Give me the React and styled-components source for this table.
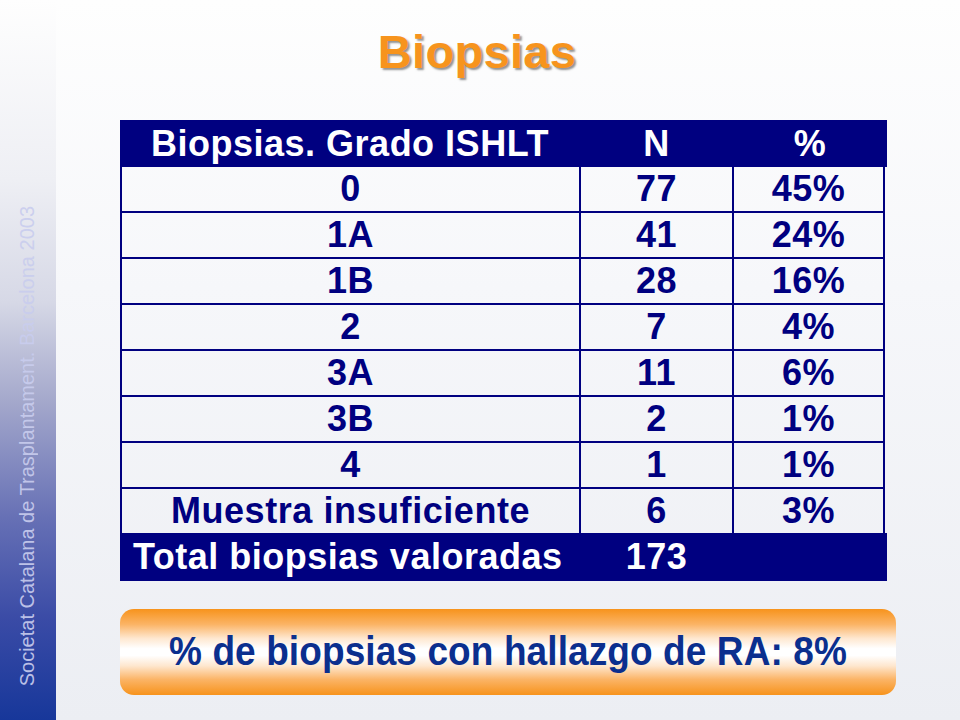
import React from "react";
import styled, { createGlobalStyle } from "styled-components";

const Global = createGlobalStyle`
  html, body { margin: 0; padding: 0; }
  body {
    width: 960px;
    height: 720px;
    overflow: hidden;
    font-family: "Liberation Sans", Arial, sans-serif;
  }
`;

const Slide = styled.div`
  display: flex;
  width: 960px;
  height: 720px;
  background: linear-gradient(180deg, #fefefe 0%, #f6f7fa 40%, #eceef3 100%);
`;

const Sidebar = styled.aside`
  flex: 0 0 56px;
  display: flex;
  flex-direction: column;
  justify-content: flex-end;
  align-items: center;
  padding-bottom: 34px;
  box-sizing: border-box;
  background: linear-gradient(
    180deg,
    #fefefe 0%,
    #eeeff4 25%,
    #d6d8e6 42%,
    #a3a7cb 56%,
    #6670b5 72%,
    #3a4ba6 86%,
    #17379a 100%
  );
`;

const SideText = styled.span`
  writing-mode: vertical-rl;
  transform: rotate(180deg);
  white-space: nowrap;
  font-size: 20px;
  color: #c9cdee;
  opacity: 0.9;
  margin-left: -2px;
`;

const Main = styled.main`
  flex: 1;
  display: flex;
  flex-direction: column;
  padding: 28px 0 0 64px;
  box-sizing: border-box;
`;

const Title = styled.h1`
  margin: 0;
  width: 714px;
  text-align: center;
  font-size: 47px;
  line-height: 1;
  font-weight: 700;
  color: #f7941d;
  letter-spacing: 0.3px;
  text-shadow: 2px 2px 2px rgba(60, 60, 60, 0.55);
`;

const Table = styled.div`
  margin-top: 45px;
  width: 767px;
  display: flex;
  flex-direction: column;
`;

const Band = styled.div`
  display: grid;
  grid-template-columns: 460px 153px 154px;
  height: ${(p) => p.$h}px;
  background: #000080;
  color: #ffffff;
  font-weight: 700;
  font-size: 36px;
  letter-spacing: 0.5px;
  align-items: center;
`;

const Body = styled.div`
  width: 765px;
  border-left: 2px solid #000080;
  border-right: 2px solid #000080;
  box-sizing: border-box;
`;

const Row = styled.div`
  display: grid;
  grid-template-columns: 459px 153px 1fr;
  height: 46px;
  box-sizing: border-box;
  border-bottom: 2px solid #000080;
  &:last-child {
    border-bottom: none;
    height: 44px;
  }
`;

const Cell = styled.div`
  display: flex;
  align-items: center;
  justify-content: center;
  font-size: 36px;
  font-weight: 700;
  letter-spacing: 0.55px;
  color: #000080;
  border-right: ${(p) => (p.$last ? "none" : "2px solid #000080")};
`;

const HeadCell = styled.div`
  display: flex;
  align-items: center;
  justify-content: ${(p) => p.$align || "center"};
  padding-left: ${(p) => p.$pad || 0}px;
`;

const Note = styled.div`
  margin-top: 28px;
  width: 776px;
  height: 86px;
  border-radius: 14px;
  display: flex;
  align-items: center;
  justify-content: center;
  background: linear-gradient(
    180deg,
    #f7931c 0%,
    #fbb466 18%,
    #fee7cf 34%,
    #ffffff 46%,
    #ffffff 54%,
    #fee7cf 66%,
    #fbb466 82%,
    #f7931c 100%
  );
`;

const NoteText = styled.span`
  font-size: 37px;
  font-weight: 700;
  color: #0b2f8e;
  display: inline-block;
  letter-spacing: 0.1px;
  transform: scaleY(1.08);
`;

const rows = [
  ["0", "77", "45%"],
  ["1A", "41", "24%"],
  ["1B", "28", "16%"],
  ["2", "7", "4%"],
  ["3A", "11", "6%"],
  ["3B", "2", "1%"],
  ["4", "1", "1%"],
  ["Muestra insuficiente", "6", "3%"],
];

export default function App() {
  return (
    <>
      <Global />
      <Slide>
        <Sidebar>
          <SideText>Societat Catalana de Trasplantament. Barcelona 2003</SideText>
        </Sidebar>
        <Main>
          <Title>Biopsias</Title>
          <Table>
            <Band $h={47}>
              <HeadCell>Biopsias. Grado ISHLT</HeadCell>
              <HeadCell>N</HeadCell>
              <HeadCell>%</HeadCell>
            </Band>
            <Body>
              {rows.map((r) => (
                <Row key={r[0]}>
                  <Cell>{r[0]}</Cell>
                  <Cell>{r[1]}</Cell>
                  <Cell $last>{r[2]}</Cell>
                </Row>
              ))}
            </Body>
            <Band $h={48}>
              <HeadCell $align="flex-start" $pad={13}>
                Total biopsias valoradas
              </HeadCell>
              <HeadCell>173</HeadCell>
              <HeadCell />
            </Band>
          </Table>
          <Note>
            <NoteText>% de biopsias con hallazgo de RA: 8%</NoteText>
          </Note>
        </Main>
      </Slide>
    </>
  );
}
